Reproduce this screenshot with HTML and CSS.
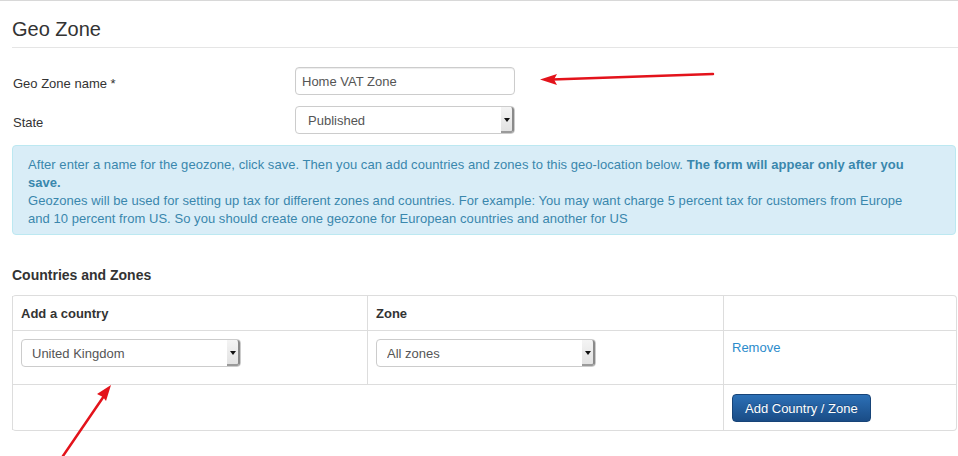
FILE: index.html
```html
<!DOCTYPE html>
<html lang="en">
  <head>
    <meta charset="UTF-8" />
    <title>Geo Zone</title>
    <link rel="stylesheet" href="styles.css">
  </head>
  <body>
    <div class="page">
      <!-- Header -->
      <h1 class="page-title">Geo Zone</h1>

      <!-- Zone details -->
      <form class="geo-form">
        <div class="form-row">
          <label for="zoneName">Geo Zone name *</label>
          <input id="zoneName" class="text-input" type="text" value="Home VAT Zone">
        </div>
        <div class="form-row">
          <label for="zoneState">State</label>
          <span class="select-wrap">
            <select id="zoneState" class="select-input">
              <option>Published</option>
              <option>Unpublished</option>
            </select>
          </span>
        </div>
      </form>

      <!-- Help text -->
      <div class="alert-info">
        After enter a name for the geozone, click save. Then you can add countries and zones to this geo-location below. <strong>The form will appear only after you save.</strong><br>
        Geozones will be used for setting up tax for different zones and countries. For example: You may want charge 5 percent tax for customers from Europe and 10 percent from US. So you should create one geozone for European countries and another for US
      </div>

      <!-- Countries and zones -->
      <h4 class="section-title">Countries and Zones</h4>
      <table class="zone-table">
        <thead>
          <tr>
            <th class="col-country">Add a country</th>
            <th class="col-zone">Zone</th>
            <th></th>
          </tr>
        </thead>
        <tbody>
          <tr>
            <td>
              <span class="select-wrap">
                <select class="select-input">
                  <option>United Kingdom</option>
                </select>
              </span>
            </td>
            <td>
              <span class="select-wrap">
                <select class="select-input">
                  <option>All zones</option>
                </select>
              </span>
            </td>
            <td><a href="#" class="remove-link">Remove</a></td>
          </tr>
          <tr>
            <td colspan="2"></td>
            <td><button type="button" class="btn-primary">Add Country / Zone</button></td>
          </tr>
        </tbody>
      </table>

      <!-- Screenshot annotations -->
      <svg class="annotations" width="958" height="456" viewBox="0 0 958 456">
        <line x1="713" y1="73" x2="552" y2="78.5" stroke="#e3131b" stroke-width="2.5" stroke-linecap="round" />
        <polygon points="540,78.5 557,73 554,78.5 557,84" fill="#e3131b" />
        <line x1="63" y1="455" x2="104" y2="395" stroke="#e3131b" stroke-width="2.5" stroke-linecap="round" />
        <polygon points="111,384 106,400 103,396 97,393" fill="#e3131b" />
      </svg>
    </div>
  </body>
</html>
```

FILE: styles.css
```css
* {
  margin: 0;
  padding: 0;
  box-sizing: border-box;
}

body {
  font-family: "Liberation Sans", Arial, sans-serif;
  font-size: 13px;
  line-height: 18px;
  color: #333;
  background: #fff;
  border-top: 1px solid #d8d8d8;
}

.page {
  position: relative;
  padding: 0 1px 0 12px;
  height: 455px;
}

.page-title {
  font-size: 20px;
  font-weight: normal;
  line-height: 24px;
  color: #333;
  padding: 16px 0 6px;
  margin-right: -1px;
  border-bottom: 1px solid #e5e5e5;
}

.geo-form {
  padding-top: 19px;
}

.form-row {
  display: flex;
  align-items: center;
  margin-bottom: 11px;
}

.form-row label {
  width: 283px;
  padding-left: 1px;
  padding-top: 5px;
}

.text-input {
  width: 220px;
  height: 28px;
  padding: 3px 6px;
  font-family: inherit;
  font-size: 13px;
  color: #555;
  border: 1px solid #ccc;
  border-radius: 4px;
  box-shadow: inset 0 1px 1px rgba(0, 0, 0, 0.075);
}

.select-wrap {
  position: relative;
  display: inline-block;
  width: 220px;
  height: 28px;
}

.select-input {
  appearance: none;
  -webkit-appearance: none;
  width: 100%;
  height: 28px;
  padding: 3px 12px;
  font-family: inherit;
  font-size: 13px;
  color: #555;
  background: #fff;
  border: 1px solid #ccc;
  border-radius: 4px;
}

/* old-style dropdown button on the right side */
.select-wrap::after {
  content: "";
  position: absolute;
  top: 1px;
  right: 1px;
  bottom: 1px;
  width: 11px;
  background: linear-gradient(#f4f4f4, #e2e2e2);
  border-right: 2px solid #8a8a8a;
  border-bottom: 2px solid #9a9a9a;
  border-radius: 0 3px 3px 0;
  pointer-events: none;
}

.select-wrap::before {
  content: "";
  position: absolute;
  top: 12px;
  right: 5px;
  border-left: 3px solid transparent;
  border-right: 3px solid transparent;
  border-top: 4px solid #111;
  z-index: 1;
  pointer-events: none;
}

.alert-info {
  margin-top: 2px;
  margin-right: 1px;
  padding: 10px 35px 6px 15px;
  background: #d9edf7;
  border: 1px solid #bce8f1;
  border-radius: 4px;
  color: #3a87ad;
  letter-spacing: 0.05px;
}

.section-title {
  font-size: 14px;
  font-weight: bold;
  line-height: 20px;
  margin-top: 30px;
  margin-bottom: 10px;
}

.zone-table {
  width: 945px;
  border-collapse: separate;
  border-spacing: 0;
  border: 1px solid #ddd;
  border-left: 0;
  border-radius: 4px;
}

.zone-table th,
.zone-table td {
  padding: 8px;
  text-align: left;
  vertical-align: top;
  border-left: 1px solid #ddd;
  border-top: 1px solid #ddd;
  line-height: 18px;
}

.zone-table thead th {
  border-top: 0;
  padding-top: 9px;
  padding-bottom: 7px;
  font-weight: bold;
}

.col-country {
  width: 355px;
}

.col-zone {
  width: 356px;
}

.zone-table td .select-wrap {
  margin-bottom: 9px;
}

.zone-table .select-input {
  padding-left: 10px;
}

.remove-link {
  color: #2b8bcb;
  text-decoration: none;
}

.btn-primary {
  height: 28px;
  margin-top: 1px;
  padding: 0 12px;
  font-family: inherit;
  font-size: 13px;
  color: #fff;
  text-shadow: 0 -1px 0 rgba(0, 0, 0, 0.25);
  background: linear-gradient(#2c70b6, #1a4c86);
  border: 1px solid #174478;
  border-radius: 4px;
  cursor: pointer;
}

.annotations {
  position: absolute;
  top: 0;
  left: 0;
  pointer-events: none;
}
```
